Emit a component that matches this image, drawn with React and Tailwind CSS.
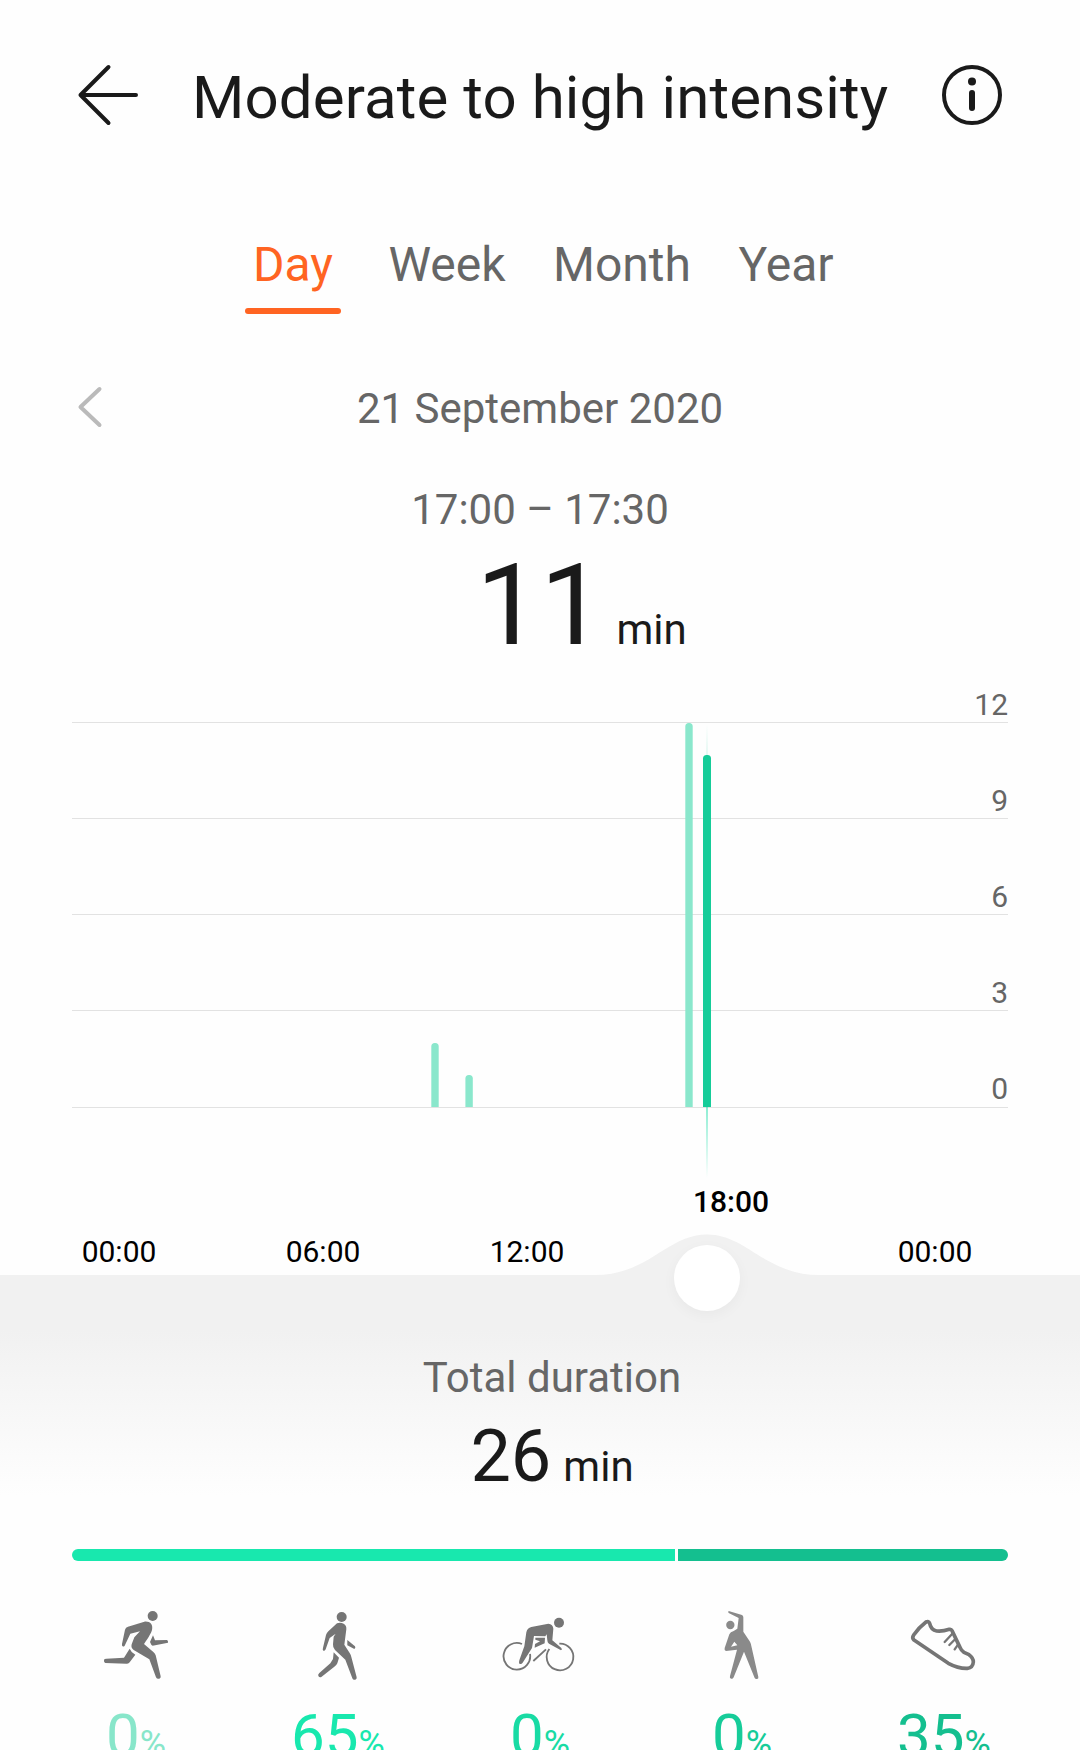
const tabs = [
  { label: 'Day', box: 'w-[96px]', active: true },
  { label: 'Week', box: 'w-[212px]' },
  { label: 'Month', box: 'w-[138px]' },
  { label: 'Year', box: 'w-[190px]' },
]

const gridRows = [
  { value: 12, height: 'h-[61px] pb-[2px]' },
  { value: 9, height: 'h-[96px] pb-[2px]' },
  { value: 6, height: 'h-[96px] pb-[2px]' },
  { value: 3, height: 'h-[96px] pb-[2px]' },
  { value: 0, height: 'h-[97px] pb-[3px]' },
]

const bars = [
  { x: 359.3, minutes: 2 },
  { x: 393.4, minutes: 1 },
  { x: 613.3, minutes: 12 },
  { x: 631, minutes: 11, selected: true },
]

const hours = ['00:00', '06:00', '12:00', '18:00', '00:00']

const activities = [
  { icon: RunIcon, percent: 0, color: 'text-[#88e6ca]' },
  { icon: WalkIcon, percent: 65, color: 'text-[#18e8ae]' },
  { icon: BikeIcon, percent: 0, color: 'text-[#18dba4]' },
  { icon: StretchIcon, percent: 0, color: 'text-[#16cc99]' },
  { icon: ShoeIcon, percent: 35, color: 'text-[#14bf8f]' },
]

function RunIcon() {
  return (
    <svg className="w-[72px] h-[72px] overflow-visible" viewBox="30 54 216 216" fill="#757575">
      <circle cx="188" cy="78" r="15" />
      <path d="M163 95 C180 93 190 104 186 120 C184 128 178 139 162 162 L190 186 Q195 190 197 196 L212 259 Q213 265 208 266 Q201 268 198 262 L178 208 L131 180 Q122 174 125 163 L133 142 L150 124 L121 131 L104 167 Q101 171 98 169 Q95 168 96 162 L105 119 Q107 112 114 110 Z" />
      <path d="M189 136 L195 151 L231 150 Q235 152 234 158 L188 167 Q184 167 180 156 Z" />
      <path d="M119 176 Q123 187 136 194 L119 217 Q116 222 109 221 L46 219 Q41 217 42 210 Q43 206 49 206 L102 203 Z" />
    </svg>
  )
}

function WalkIcon() {
  return (
    <svg className="w-[72px] h-[72px] overflow-visible" viewBox="636 54 216 216" fill="#757575">
      <circle cx="755" cy="81" r="15" />
      <path d="M741 100 Q751 96 761 101 Q770 106 769 118 L763 164 L779 189 Q783 195 784 201 L800 262 Q801 268 796 269 Q789 271 787 265 L766 209 L735 180 Q728 173 729 163 L731 140 L737 131 L719 144 L707 178 Q704 184 700 182 Q697 180 699 173 L708 135 Q710 129 715 124 Z" />
      <path d="M772 150 L795 169 Q798 174 793 177 L772 166 Z" />
      <path d="M731 187 L747 203 L742 220 Q740 226 733 230 L694 261 Q688 263 685 258 Q683 253 688 249 L721 220 L729 207 Z" />
    </svg>
  )
}

function BikeIcon() {
  return (
    <svg className="w-[72px] h-[72px] overflow-visible" viewBox="72 54 216 216" fill="#757575">
      <g fill="none" stroke="#757575" strokeWidth="5.5">
        <path d="M126 162 A40 40 0 1 0 150 192" />
        <path d="M208 177 A40 40 0 1 0 238 161" />
        <path d="M160 213 L198 178" />
      </g>
      <circle cx="237" cy="98" r="15" />
      <path d="M154 111 L205 101 Q219 102 220 116 L217 151 L244 174 Q248 179 243 181 L207 161 Q202 158 202 151 L200 133 L196 139 L162 138 L156 174 L128 218 Q124 224 118 221 Q116 218 118 211 L133 169 L139 127 Q142 114 154 111 Z" />
      <path d="M166 143 L195 143 L194 160 L164 173 L165 162 L180 154 L166 149 Z" />
    </svg>
  )
}

function StretchIcon() {
  return (
    <svg className="w-[72px] h-[72px] overflow-visible" viewBox="678 54 216 216" fill="#8a8a8a">
      <circle cx="751" cy="105" r="12.5" />
      <path fillRule="evenodd" d="M746 63 L786 75 Q790 77 790 82 L790 125 L810 155 Q813 161 814 168 L835 261 Q836 267 831 267 Q826 268 824 264 L792 185 L761 262 Q758 268 753 266 Q748 265 750 258 L771 179 L738 183 Q732 181 734 174 L748 133 Q751 125 761 123 L772 116 L776 84 L746 69 Q743 66 746 63 Z M763 155 L753 170 L772 166 Z" />
    </svg>
  )
}

function ShoeIcon() {
  return (
    <svg className="w-[72px] h-[72px] overflow-visible" viewBox="84 54 216 216" fill="none" stroke="#757575" strokeLinecap="round" strokeLinejoin="round">
      <path strokeWidth="11" d="M138 96 Q146 92 149 100 Q153 120 170 123 Q187 125 208 118 Q214 117 216 122 L240 172 Q244 182 252 187 L267 194 Q280 203 280 216 Q279 233 262 235 Q235 236 205 220 L102 150 Q95 144 101 135 Q117 112 138 96 Z" />
      <path strokeWidth="7" d="M219 129 L194 156 M226 147 L208 165 M234 164 L224 178" />
    </svg>
  )
}

function Header() {
  return (
    <header className="flex items-center h-[190px] pl-[72px]">
      <svg className="w-[72px] h-[72px] shrink-0" viewBox="0 0 72 72" fill="none" stroke="#1a1a1a" strokeWidth="4" strokeLinecap="round" strokeLinejoin="round">
        <path d="M36.5 8 L8.5 36 L36.5 64 M8.5 36 H64" />
      </svg>
      <h1 className="pt-[5px] ml-[48px] w-[750px] text-[60px] tracking-[0.1px] whitespace-nowrap">Moderate to high intensity</h1>
      <svg className="w-[60px] h-[60px] shrink-0" viewBox="0 0 60 60" fill="none" stroke="#1a1a1a">
        <circle cx="30" cy="30" r="28" strokeWidth="4" />
        <circle cx="30" cy="16.5" r="4" fill="#1a1a1a" stroke="none" />
        <path d="M30 28 V43" strokeWidth="6" strokeLinecap="round" />
      </svg>
    </header>
  )
}

function Chart() {
  return (
    <section className="relative">
      <div className="mx-[72px]">
        {gridRows.map((row) => (
          <div key={row.value} className={`${row.height} flex items-end justify-end border-b border-[#e2e2e2] text-[30px] leading-[30px] text-[#666]`}>
            {row.value}
          </div>
        ))}
      </div>

      {/* Bars and selection marker */}
      <svg className="absolute left-[72px] top-[60px] w-[936px] h-[460px]" viewBox="0 0 936 460">
        <defs>
          <linearGradient id="marker" x1="0" y1="0" x2="0" y2="1">
            <stop offset="0" stopColor="#16cc99" stopOpacity="0" />
            <stop offset="0.5" stopColor="#16cc99" stopOpacity="0.8" />
            <stop offset="0.84" stopColor="#16dca6" stopOpacity="0.5" />
            <stop offset="1" stopColor="#16dca6" stopOpacity="0" />
          </linearGradient>
        </defs>
        <rect x="634" y="2" width="2" height="454" fill="url(#marker)" />
        {bars.map((bar) => (
          <path
            key={bar.x}
            d={`M${bar.x} 385 V${388.5 - bar.minutes * 32} q0 -3.5 3.5 -3.5 h${bar.selected ? 1 : 0.4} q3.5 0 3.5 3.5 V385 Z`}
            fill={bar.selected ? '#16cc99' : '#8ae7cc'}
          />
        ))}
      </svg>

      <div className="flex items-end h-[167px] mx-[17px] pb-[3px]">
        {hours.map((hour, idx) => (
          <span
            key={idx}
            className={`w-[204px] text-center text-[30px] leading-[40px] text-black ${idx === 3 ? 'font-medium mb-[50px]' : ''}`}
          >
            {hour}
          </span>
        ))}
      </div>
    </section>
  )
}

function Summary() {
  return (
    <section className="relative pt-[73px]">
      <div className="absolute inset-x-0 top-0 h-[220px] bg-linear-to-b from-[#f1f1f1] from-25% to-[#fefefe]" />

      {/* Slider handle */}
      <svg className="absolute left-[587px] top-[-41px] w-[240px] h-[42px]" viewBox="0 0 240 42">
        <path d="M8 42 V41 C62 41 80 0.5 120 0.5 C160 0.5 178 41 232 41 V42 Z" fill="#f1f1f1" />
      </svg>
      <div className="absolute left-[674px] top-[-30px] w-[66px] h-[66px] rounded-full bg-white shadow-[0_4px_14px_rgba(0,0,0,0.04)]" />

      <div className="relative pl-6 text-center">
        <p className="text-[42px] leading-[60px] text-[#666]">Total duration</p>
        <p className="flex items-baseline justify-center mt-[13px] text-[72px] leading-[72px]">
          26<span className="ml-3 text-[42px] leading-none">min</span>
        </p>
      </div>

      <div className="flex gap-[3px] h-3 mx-[72px] mt-[56px] rounded-full overflow-hidden">
        <div className="w-[603px] bg-[#18e8ae]" />
        <div className="flex-1 bg-[#14bf8f]" />
      </div>

      <div className="grid grid-cols-5 mx-[35px] mt-[47px]">
        {activities.map(({ icon: Icon, percent, color }, idx) => (
          <div key={idx} className="flex flex-col items-center">
            <Icon />
            <p className={`flex items-baseline mt-[26px] text-[60px] leading-[60px] ${color}`}>
              {percent}<span className="text-[36px] leading-none">%</span>
            </p>
          </div>
        ))}
      </div>
    </section>
  )
}

export default function App() {
  return (
    <div className="w-[1080px] h-[1750px] overflow-hidden bg-[#fefefe] font-['Roboto',sans-serif] text-[#1a1a1a]">
      <Header />

      <nav className="flex mt-[45px] pl-[245px] text-[48px] leading-[60px] text-[#666]">
        {tabs.map((tab) => (
          <div key={tab.label} className={`${tab.box} shrink-0 text-center ${tab.active ? 'text-[#ff6422]' : ''}`}>
            {tab.label}
            {tab.active && <div className="h-1.5 mt-[13px] rounded-full bg-[#ff6422]" />}
          </div>
        ))}
      </nav>

      <div className="flex items-center h-[60px] mt-[65px] px-[72px] text-[42px] leading-[60px] text-[#666]">
        <svg className="w-[36px] h-[48px] mb-1" viewBox="0 0 36 48" fill="none" stroke="#bababa" strokeWidth="4" strokeLinecap="round" strokeLinejoin="round">
          <path d="M27.5 6 L8.5 24 L27.5 42" />
        </svg>
        <p className="flex-1 pr-[36px] text-center">21 September 2020</p>
      </div>
      <p className="mt-[41px] text-center text-[42px] leading-[60px] text-[#666]">17:00 – 17:30</p>
      <p className="flex items-baseline justify-center h-[114px] mt-2 pl-[83px] text-[114px] leading-[114px]">
        11<span className="ml-3 text-[42px] leading-none">min</span>
      </p>

      <Chart />
      <Summary />
    </div>
  )
}
